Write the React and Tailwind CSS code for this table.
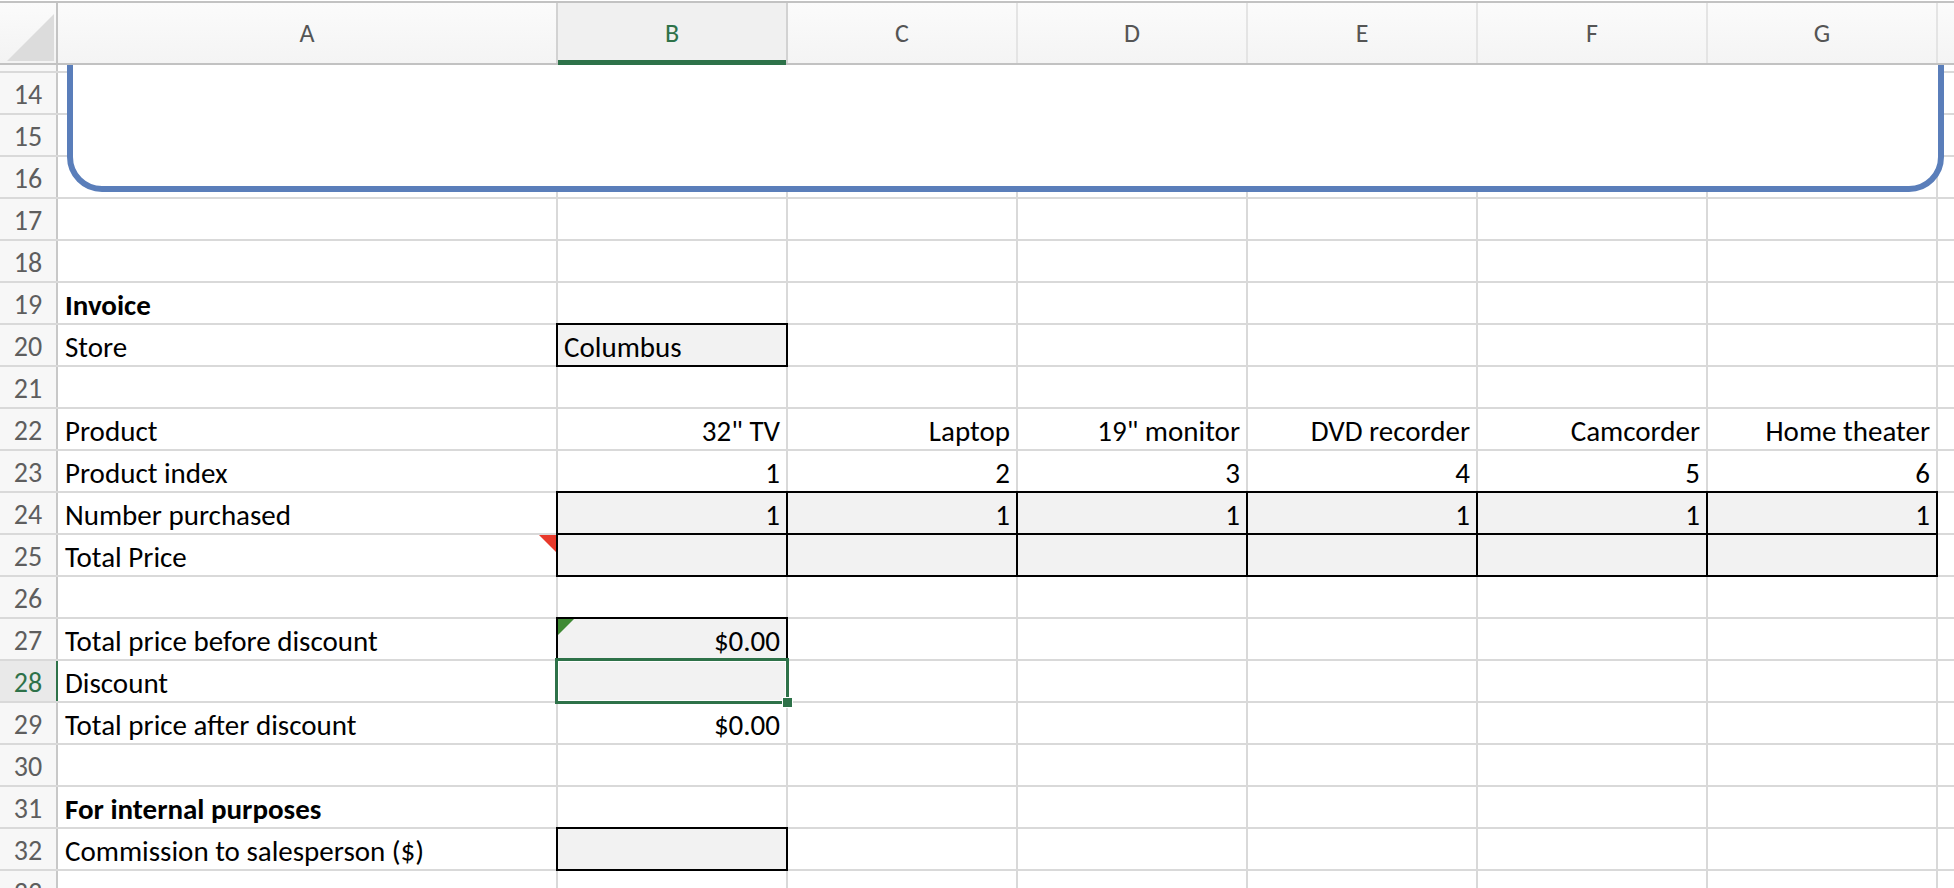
import React from 'react';
import clsx from 'clsx';

const COLS = 'grid-cols-[56px_498px_228px_228px_228px_228px_228px_228px_1fr]';
const LETTERS = ['A', 'B', 'C', 'D', 'E', 'F', 'G', ''];

const box = (t, extra = {}) => ({ t, box: true, fill: true, ...extra });

const rows = [
  { n: 13, stub: true },
  { n: 14 }, { n: 15 }, { n: 16 }, { n: 17 }, { n: 18 },
  { n: 19, a: 'Invoice', bold: true },
  { n: 20, a: 'Store', cells: [box('Columbus', { left: true })] },
  { n: 21 },
  { n: 22, a: 'Product', cells: ['32" TV', 'Laptop', '19" monitor', 'DVD recorder', 'Camcorder', 'Home theater'].map((t) => ({ t })) },
  { n: 23, a: 'Product index', cells: [1, 2, 3, 4, 5, 6].map((t) => ({ t })) },
  { n: 24, a: 'Number purchased', cells: [1, 1, 1, 1, 1, 1].map((t) => box(t)) },
  { n: 25, a: 'Total Price', note: true, cells: [0, 1, 2, 3, 4, 5].map(() => box('')) },
  { n: 26 },
  { n: 27, a: 'Total price before discount', cells: [box('$0.00', { flag: true })] },
  { n: 28, a: 'Discount', active: true, cells: [{ t: '', fill: true, sel: true }] },
  { n: 29, a: 'Total price after discount', cells: [{ t: '$0.00' }] },
  { n: 30 },
  { n: 31, a: 'For internal purposes', bold: true },
  { n: 32, a: 'Commission to salesperson ($)', cells: [box('')] },
  { n: 33 },
];

const Cell = ({ c }) => {
  if (!c) return <div className="bg-white" />;
  return (
    <div
      className={clsx(
        'relative flex items-center px-[6px] pt-[4px] text-[29px] leading-none text-black',
        c.left ? 'justify-start' : 'justify-end',
        c.fill ? 'bg-[#f2f2f2]' : 'bg-white',
        c.box && 'outline-2 outline-black',
        c.sel && 'z-10 outline-[3px] outline-[#2e7249] shadow-[inset_0_0_0_1px_#ffffff]'
      )}
    >
      {c.flag && (
        <span className="absolute left-0 top-0 h-[16px] w-[16px] bg-[#3f8a34] [clip-path:polygon(0_0,100%_0,0_100%)]" />
      )}
      {c.sel && (
        <span className="absolute -bottom-[7px] -right-[7px] h-[11px] w-[11px] border border-white bg-[#2e7249]" />
      )}
      {c.t}
    </div>
  );
};

export default function App() {
  return (
    <div className="h-[888px] w-[1954px] overflow-hidden bg-white font-['Carlito','Lato',sans-serif] select-none">
      {/* column header */}
      <div className="pt-[1px]">
        <div className={clsx('grid h-[64px] gap-x-[2px] border-y-2 border-[#c2c2c2] bg-[#e4e4e4]', COLS)}>
          <div className="flex items-end justify-end bg-gradient-to-b from-[#fbfbfb] to-[#f3f3f3] pb-[2px] pr-[2px] shadow-[2px_0_0_0_#c4c4c4]">
            <div className="h-[47px] w-[47px] bg-[#dcdcdc] [clip-path:polygon(100%_0,100%_100%,0_100%)]" />
          </div>
          {LETTERS.map((l) => (
            <div
              key={l || 'h'}
              className={clsx(
                'flex items-center justify-center text-[26px]',
                l === 'B'
                  ? 'bg-[#f0f0f0] font-medium text-[#2e7249] shadow-[0_2px_0_0_#2e7249,inset_0_-3px_0_0_#2e7249,-2px_0_0_0_#d2d2d2,2px_0_0_0_#d2d2d2]'
                  : 'bg-gradient-to-b from-[#fbfbfb] to-[#f4f4f4] text-[#555555]'
              )}
            >
              {l}
            </div>
          ))}
        </div>
      </div>

      {/* sheet body */}
      <div className="relative h-[823px] overflow-hidden">
        <div className={clsx('grid auto-rows-[40px] grid-rows-[6px] gap-[2px] bg-[#d9d9d9]', COLS)}>
          {rows.map((r) => (
            <React.Fragment key={r.n}>
              <div
                className={clsx(
                  'flex items-center justify-center pt-[3px] text-[28px] leading-none',
                  r.active
                    ? 'bg-[#e9e9e9] text-[#2e7249] shadow-[3px_0_0_0_#2e7249]'
                    : 'bg-[#f7f7f7] text-[#5e5e5e] shadow-[2px_0_0_0_#c8c8c8]'
                )}
              >
                {r.stub ? '' : r.n}
              </div>
              <div
                className={clsx(
                  'relative flex items-center bg-white pl-[7px] pt-[4px] text-[29px] leading-none text-black',
                  r.bold && 'font-bold'
                )}
              >
                {r.a}
                {r.note && (
                  <span className="absolute right-0 top-0 h-[17px] w-[17px] bg-[#e8392b] [clip-path:polygon(0_0,100%_0,100%_100%)]" />
                )}
              </div>
              {[0, 1, 2, 3, 4, 5].map((i) => (
                <Cell key={i} c={r.cells && r.cells[i]} />
              ))}
              <div className="bg-white" />
            </React.Fragment>
          ))}
        </div>

        {/* text box shape sitting over rows 13-16 */}
        <div className="absolute left-[67px] top-[-40px] h-[167px] w-[1877px] rounded-[35px] border-[6px] border-[#5a7eba] bg-white" />
      </div>
    </div>
  );
}
